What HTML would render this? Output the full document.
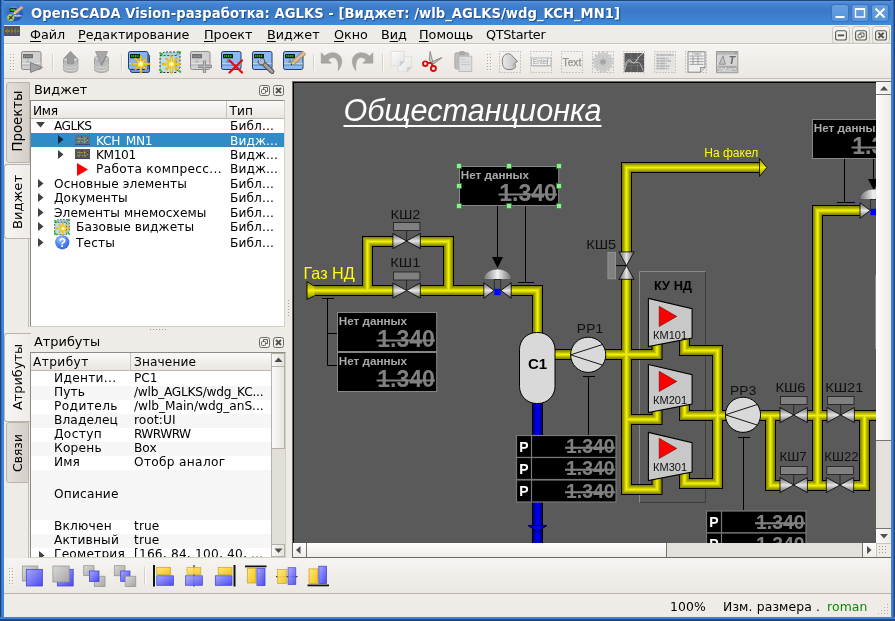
<!DOCTYPE html>
<html lang="ru"><head><meta charset="utf-8"><title>OpenSCADA Vision</title>
<style>
*{box-sizing:border-box}
html,body{margin:0;padding:0}
body{width:895px;height:621px;position:relative;overflow:hidden;background:#efebe7;font-family:"DejaVu Sans","Liberation Sans",sans-serif;font-size:12.5px;color:#000}
.a{position:absolute}
.t{position:absolute;white-space:pre;line-height:1}
u{text-decoration:underline;text-underline-offset:2px}
svg{position:absolute;overflow:visible}
#root{position:absolute;left:0;top:0;width:895px;height:621px;will-change:transform}

#title{left:0;top:0;width:895px;height:25px;background:linear-gradient(#5797e0 0,#4384d2 12%,#3a79c6 38%,#3c80ce 65%,#408ad9 100%);border-top:1px solid #21467c}
#title .tt{left:31px;top:6.3px;font-weight:bold;font-size:13.2px;letter-spacing:.02px;color:#fff;text-shadow:1px 1px 1px #1c4a8a}
.wb{position:absolute;top:3.4px;width:18px;height:18px;border-radius:3px;background:linear-gradient(#679fe0,#5594dc);border:1px solid #3a72bd}
#bl{left:0;top:0;width:4px;height:621px;background:linear-gradient(90deg,#1f4478 0,#1f4478 25%,#3270bd 25%,#3270bd 50%,#3d86dc 50%)}
#br{left:891px;top:0;width:4px;height:621px;background:linear-gradient(90deg,#3d86dc 0,#3a7ed0 55%,#234c86 70%,#1c3f70 100%)}
#bb{left:0;top:617px;width:895px;height:4px;background:linear-gradient(#3d86dc 0,#3a7ed0 50%,#234c86 62%,#1c3f70 100%)}
#menu{left:4px;top:25px;width:887px;height:19px;background:#efebe7;border-bottom:1px solid #c9c3bb}
#menu .t{top:4px;font-size:12.750px}
#tb{left:4px;top:44px;width:887px;height:35px;background:linear-gradient(#f6f4f1,#ebe7e2);border-top:1px solid #fbfaf9;border-bottom:1px solid #c4beb6}
.sep{position:absolute;top:54px;width:1px;height:17px;background:#d6d1ca;border-right:1px solid #faf9f8;box-sizing:content-box}
.mb{position:absolute;top:26px;width:18px;height:18px;border:1px solid #cbc5bd;border-radius:3.500px;background:linear-gradient(#f6f4f2,#ebe8e3)}

.vtab{position:absolute;border:1px solid #b9b4ac;border-right:none;border-radius:3px 0 0 3px}
.vtab.off{background:linear-gradient(90deg,#e2ded8,#d4cfc8);left:6px;width:24px;border-right:1px solid #b9b4ac}
.vtab.on{background:linear-gradient(90deg,#f7f5f3,#efebe7);left:4px;width:27px}
.vtab span{position:absolute;left:50%;top:50%;white-space:pre;font-size:13.1px;line-height:1;transform:translate(-50%,-50%) rotate(-90deg)}
.dt{font-size:12.9px}
.tree{position:absolute;background:#fff;border:1px solid #8f8a82;border-right-color:#d2cec8;border-bottom-color:#d2cec8;overflow:hidden}
.hdr{position:absolute;left:0;top:0;height:18px;background:linear-gradient(#fbfaf9,#e9e6e1);border-bottom:1px solid #bdb8b0}
.tree .t{font-size:12.2px;letter-spacing:.1px}
.dbtn{position:absolute;width:11px;height:11px;border:1px solid #6e6a64;border-radius:2.5px;background:#f3f1ee}
.tri{position:absolute;width:0;height:0}

#mdi{left:292px;top:81px;width:599px;height:477px;background:#6b6864}
#cv{left:293px;top:82px;width:583px;height:462px;background:#5a5a5a;overflow:hidden}
#cv svg{left:0;top:0}
.sbb{position:absolute;background:linear-gradient(#faf9f8,#e7e3de);border:1px solid #b3aea6}
.sbv{position:absolute;background:linear-gradient(90deg,#faf9f8,#e7e3de);border:1px solid #b3aea6}

#btb{left:4px;top:558px;width:887px;height:35px;background:linear-gradient(#f6f4f1,#ece8e3)}
#st{left:4px;top:593px;width:887px;height:24px;border-top:1px solid #b9b4ac;background:#efebe7}
#st .t{font-size:12.4px;top:6.500px;letter-spacing:.12px}
</style></head>
<body>
<div id="root">
<div id="title" class="a"><div class="t tt">OpenSCADA Vision-разработка: AGLKS - [Виджет: /wlb_AGLKS/wdg_KCH_MN1]</div>
<svg class="a" style="left:7px;top:4px" width="17" height="17" viewBox="0 0 17 17"><defs><radialGradient id="ag" cx=".4" cy=".25" r=".8"><stop offset="0" stop-color="#6f9bf0"/><stop offset=".6" stop-color="#2b5cd2"/><stop offset="1" stop-color="#1f46a8"/></radialGradient></defs><circle cx="8" cy="8.2" r="7.8" fill="url(#ag)"/><rect x="2.6" y="3.2" width="7" height="3.8" rx=".6" fill="#0c1a0c"/><rect x="3.4" y="4.1" width="5.2" height="1.9" fill="#22c022"/><circle cx="3.7" cy="12.4" r="3.5" fill="#b4c860"/><path d="M1.8 14.6l4-4.2M2.3 11.3l3 2.6" stroke="#2c3010" stroke-width="1.1"/><path d="M7 10.8h7.6" stroke="#d6d040" stroke-width="1.3"/><path d="M8.5 9.8l.8 1.8M11.5 9.6l.6 2" stroke="#e8e8c0" stroke-width=".8"/><path d="M7.3 8.2L15.3 2" stroke="#b89468" stroke-width="3"/><path d="M7.3 8.2L15.3 2" stroke="#e2bd8c" stroke-width="2"/><path d="M6.2 9.2l1.3-2.4 1.7 2z" fill="#e6d870"/></svg>
<div class="wb" style="left:831px"><svg width="18" height="18" style="left:-1px;top:-1px"><path d="M4.5 13h9" stroke="#fff" stroke-width="2"/></svg></div><div class="wb" style="left:851px"><svg width="18" height="18" style="left:-1px;top:-1px"><rect x="4.5" y="5" width="9" height="8" fill="none" stroke="#fff" stroke-width="1.4"/><path d="M4 5h10" stroke="#fff" stroke-width="2"/></svg></div><div class="wb" style="left:871px"><svg width="18" height="18" style="left:-1px;top:-1px"><path d="M4.5 4.5l9 9M13.5 4.5l-9 9" stroke="#fff" stroke-width="2"/></svg></div></div>
<div id="bl" class="a"></div><div id="br" class="a"></div><div id="bb" class="a"></div>
<div id="menu" class="a"><div class="t" style="left:26px"><u>Ф</u>айл</div><div class="t" style="left:74px"><u>Р</u>едактирование</div><div class="t" style="left:200px"><u>П</u>роект</div><div class="t" style="left:263px"><u>В</u>иджет</div><div class="t" style="left:330px"><u>О</u>кно</div><div class="t" style="left:377px">В<u>и</u>д</div><div class="t" style="left:415px"><u>П</u>омощь</div><div class="t" style="left:482px"><span style="letter-spacing:-.3px">QTStarter</span></div></div>
<svg class="a" style="left:4.4px;top:26px" width="16" height="10"><rect width="16" height="10" fill="#55555a"/><path d="M1 5h14" stroke="#b0a83a" stroke-width="1.2" stroke-dasharray="2 1"/><path d="M3.5 2.5v5M7.5 2.5v5M11.5 2.5v5" stroke="#77775c" stroke-width="1"/><rect y="9" width="16" height="1" fill="#4a4a80"/></svg>
<div class="mb" style="left:832px"><svg width="16" height="16"><rect x="2.600" y="3.700" width="10.800" height="9.300" rx="2" fill="#f6f5f3" stroke="#5a5751" stroke-width="1.100"/><path d="M4.800 8.400h6.400" stroke="#5a5751" stroke-width="2"/></svg></div><div class="mb" style="left:852px"><svg width="16" height="16"><rect x="2.600" y="3.700" width="10.800" height="9.300" rx="2" fill="#f6f5f3" stroke="#5a5751" stroke-width="1.100"/><rect x="5" y="7.500" width="3.600" height="3.400" rx="1" fill="none" stroke="#5a5751" stroke-width="1"/><path d="M6.800 7.300V6h4.200v3.800H9" fill="none" stroke="#5a5751" stroke-width="1"/></svg></div><div class="mb" style="left:872px"><svg width="16" height="16"><rect x="2.600" y="3.700" width="10.800" height="9.300" rx="2" fill="#f6f5f3" stroke="#5a5751" stroke-width="1.100"/><path d="M5.300 5.800l5.400 5.200M10.700 5.800l-5.400 5.200" stroke="#5a5751" stroke-width="2"/></svg></div>
<div id="tb" class="a"></div>
<svg class="a" style="left:10px;top:54px" width="6" height="22"><rect x="0" y="0" width="1" height="1" fill="#b0aaa1"/><rect x="1" y="1" width="1" height="1" fill="#fbfaf9"/><rect x="3" y="0" width="1" height="1" fill="#b0aaa1"/><rect x="4" y="1" width="1" height="1" fill="#fbfaf9"/><rect x="0" y="3" width="1" height="1" fill="#b0aaa1"/><rect x="1" y="4" width="1" height="1" fill="#fbfaf9"/><rect x="3" y="3" width="1" height="1" fill="#b0aaa1"/><rect x="4" y="4" width="1" height="1" fill="#fbfaf9"/><rect x="0" y="6" width="1" height="1" fill="#b0aaa1"/><rect x="1" y="7" width="1" height="1" fill="#fbfaf9"/><rect x="3" y="6" width="1" height="1" fill="#b0aaa1"/><rect x="4" y="7" width="1" height="1" fill="#fbfaf9"/><rect x="0" y="9" width="1" height="1" fill="#b0aaa1"/><rect x="1" y="10" width="1" height="1" fill="#fbfaf9"/><rect x="3" y="9" width="1" height="1" fill="#b0aaa1"/><rect x="4" y="10" width="1" height="1" fill="#fbfaf9"/><rect x="0" y="12" width="1" height="1" fill="#b0aaa1"/><rect x="1" y="13" width="1" height="1" fill="#fbfaf9"/><rect x="3" y="12" width="1" height="1" fill="#b0aaa1"/><rect x="4" y="13" width="1" height="1" fill="#fbfaf9"/><rect x="0" y="15" width="1" height="1" fill="#b0aaa1"/><rect x="1" y="16" width="1" height="1" fill="#fbfaf9"/><rect x="3" y="15" width="1" height="1" fill="#b0aaa1"/><rect x="4" y="16" width="1" height="1" fill="#fbfaf9"/></svg>
<svg class="a" style="left:21px;top:51px" width="22" height="22" viewBox="0 0 22 22"><rect x=".5" y=".5" width="19.5" height="18" rx="1.8" fill="#d0d0d0" stroke="#8c8c8c"/><rect x="2" y="3" width="10" height="4.200" rx=".5" fill="#6e6e6e"/><path d="M3 5.100h8" stroke="#a0a0a0" stroke-width="1.400" stroke-dasharray="1.400 .6"/><path d="M7 7.500v3.500M5 11h4" stroke="#a9a9a9" stroke-width=".8"/><rect x="1" y="12" width="18.500" height="1.300" fill="#e2e2e2"/><rect x="1" y="13.300" width="18.500" height="1.500" fill="#bcbcbc"/><path d="M9.500 11.500l12 5-12 5z" fill="#a3a3a3" stroke="#828282" stroke-linejoin="round"/></svg>
<div class="sep" style="left:52px"></div><svg class="a" style="left:59px;top:51px" width="22" height="22" viewBox="0 0 22 22"><path d="M4.5 8v10.5c0 1.800 3.200 3 7.200 3s7.200-1.200 7.200-3V8z" fill="#bcbcbc" stroke="#9a9a9a" stroke-width=".8"/><path d="M4.5 13.5c0 1.800 3.200 3 7.200 3s7.200-1.200 7.200-3M4.5 16.5c0 1.800 3.200 3 7.200 3s7.200-1.200 7.200-3" fill="none" stroke="#d8d8d8" stroke-width=".9"/><ellipse cx="11.7" cy="8.5" rx="7.2" ry="3" fill="#cdcdcd" stroke="#9a9a9a" stroke-width=".8"/><path d="M11.5 .3l6 6.500h-3v6h-6v-6h-3z" fill="#9c9c9c" stroke="#8a8a8a" stroke-width=".7"/></svg>
<svg class="a" style="left:90px;top:51px" width="22" height="22" viewBox="0 0 22 22"><path d="M4.5 7v11.5c0 1.800 3.200 3 7 3s7-1.200 7-3V7z" fill="#bcbcbc" stroke="#9a9a9a" stroke-width=".8"/><path d="M4.5 13.5c0 1.800 3.200 3 7 3s7-1.200 7-3M4.5 16.500c0 1.800 3.200 3 7 3s7-1.200 7-3" fill="none" stroke="#d8d8d8" stroke-width=".9"/><ellipse cx="11.5" cy="7.5" rx="7" ry="2.800" fill="#cdcdcd" stroke="#9a9a9a" stroke-width=".8"/><path d="M5.5 .5h12l-6 13.800z" fill="#a8a8a8" stroke="#8a8a8a" stroke-width=".7"/><path d="M11.5 14l5-9" stroke="#8a8a8a" stroke-width="1.200"/></svg>
<div class="sep" style="left:121px"></div><svg class="a" style="left:128px;top:51px" width="22" height="22" viewBox="0 0 22 22"><rect x="2.500" y="3.500" width="19" height="18" rx="1.800" fill="#6a98e2" stroke="#1f3d70"/><rect x=".5" y=".5" width="19.500" height="18" rx="1.800" fill="#86b2f2" stroke="#1f3d70"/><rect x="2" y="3" width="10" height="4.200" rx=".5" fill="#0a1f0a"/><path d="M3 5.100h8" stroke="#2fd42f" stroke-width="1.500" stroke-dasharray="1.400 .6"/><rect x="1" y="12" width="5" height="1.200" fill="#d8e050"/><g transform="translate(12.8 12.9)"><g stroke="#eeb000" stroke-linecap="round"><path d="M0 -7.500V8.500M-8.500 0H8.500" stroke-width="2.300"/><path d="M-5.200 -5.200L5.200 5.200M5.200 -5.200L-5.200 5.200" stroke-width="2.100"/></g><g stroke="#ffe030" stroke-linecap="round"><path d="M0 -6V7M-7 0H7M-4 -4L4 4M4 -4L-4 4" stroke-width="1"/></g><circle r="2.600" fill="#fff27a"/><circle r="1.300" fill="#fffbd0"/></g></svg>
<svg class="a" style="left:159px;top:51px" width="22" height="22" viewBox="0 0 22 22"><path d="M1 4.500L5 1h16v16l-4 4.500H1z" fill="#a9d2da" stroke="#223" stroke-width=".9" stroke-dasharray="2 1.600"/><path d="M1 4.500h16v17M17 4.500l4-3.500" fill="none" stroke="#335" stroke-width=".8" stroke-dasharray="2 1.600"/><rect x="2" y="5.500" width="14.500" height="15.500" fill="#c2e2e6" opacity=".7"/><path d="M.5 1.500l3 2.500M22 1.500l-3-1M.5 18.500l3 3M22 21.500l-2.500-2" stroke="#18c818" stroke-width="1.700"/><g transform="translate(12.5 13)"><g stroke="#eeb000" stroke-linecap="round"><path d="M0 -7.500V8.500M-8.500 0H8.500" stroke-width="2.300"/><path d="M-5.200 -5.200L5.200 5.200M5.200 -5.200L-5.200 5.200" stroke-width="2.100"/></g><g stroke="#ffe030" stroke-linecap="round"><path d="M0 -6V7M-7 0H7M-4 -4L4 4M4 -4L-4 4" stroke-width="1"/></g><circle r="2.600" fill="#fff27a"/><circle r="1.300" fill="#fffbd0"/></g></svg>
<svg class="a" style="left:190px;top:51px" width="22" height="22" viewBox="0 0 22 22"><rect x=".5" y=".5" width="19.5" height="18" rx="1.8" fill="#d0d0d0" stroke="#8c8c8c"/><rect x="2" y="3" width="10" height="4.200" rx=".5" fill="#6e6e6e"/><path d="M3 5.100h8" stroke="#a0a0a0" stroke-width="1.400" stroke-dasharray="1.400 .6"/><path d="M7 7.500v3.500M5 11h4" stroke="#a9a9a9" stroke-width=".8"/><rect x="1" y="12" width="18.500" height="1.300" fill="#e2e2e2"/><rect x="1" y="13.300" width="18.500" height="1.500" fill="#bcbcbc"/><path d="M14.500 9.500v12.500M8 15.400h14" stroke="#8c8c8c" stroke-width="3.200"/><path d="M14.500 10v11.500M8.500 15.400h13" stroke="#b8b8b8" stroke-width="1.400"/></svg>
<svg class="a" style="left:221px;top:51px" width="22" height="22" viewBox="0 0 22 22"><rect x=".5" y=".5" width="19.500" height="18" rx="1.800" fill="#8dbaf4" stroke="#1f3d70"/><rect x="2" y="3" width="10" height="4.200" rx=".5" fill="#0a1f0a"/><path d="M3 5.100h8" stroke="#2fd42f" stroke-width="1.500" stroke-dasharray="1.400 .6"/><path d="M7 7.500v3.500M5 11h4" stroke="#4a6a9a" stroke-width=".8"/><rect x="1" y="12" width="18.500" height="1.400" fill="#d8e050"/><rect x="1" y="13.400" width="18.500" height="1.500" fill="#6a9ae0"/><path d="M8.500 9.500l12.500 12M21 9.500L8.500 21.500" stroke="#e60a0a" stroke-width="2.300" stroke-linecap="round"/></svg>
<svg class="a" style="left:252px;top:51px" width="22" height="22" viewBox="0 0 22 22"><rect x=".5" y=".5" width="19.500" height="18" rx="1.800" fill="#8dbaf4" stroke="#1f3d70"/><rect x="2" y="3" width="10" height="4.200" rx=".5" fill="#0a1f0a"/><path d="M3 5.100h8" stroke="#2fd42f" stroke-width="1.500" stroke-dasharray="1.400 .6"/><path d="M7 7.500v3.500M5 11h4" stroke="#4a6a9a" stroke-width=".8"/><rect x="1" y="12" width="18.500" height="1.400" fill="#d8e050"/><rect x="1" y="13.400" width="18.500" height="1.500" fill="#6a9ae0"/><path d="M10.500 11.500l9.500 9" stroke="#4e4e4e" stroke-width="4.800" stroke-linecap="round"/><path d="M10.500 11.500l9.500 9" stroke="#a2a2a2" stroke-width="3" stroke-linecap="round"/><circle cx="9.500" cy="10.500" r="3.300" fill="#bdbdbd" stroke="#4e4e4e" stroke-width=".9"/><path d="M6.500 7.500l3.200 3.200" stroke="#8dbaf4" stroke-width="2.200"/></svg>
<svg class="a" style="left:283px;top:51px" width="22" height="22" viewBox="0 0 22 22"><rect x=".5" y=".5" width="19.500" height="18" rx="1.800" fill="#8dbaf4" stroke="#1f3d70"/><rect x="2" y="3" width="10" height="4.200" rx=".5" fill="#0a1f0a"/><path d="M3 5.100h8" stroke="#2fd42f" stroke-width="1.500" stroke-dasharray="1.400 .6"/><path d="M7 7.500v3.500M5 11h4" stroke="#4a6a9a" stroke-width=".8"/><rect x="1" y="12" width="18.500" height="1.400" fill="#d8e050"/><rect x="1" y="13.400" width="18.500" height="1.500" fill="#6a9ae0"/><path d="M11 11L21.500 1.500" stroke="#9a7a50" stroke-width="4.600"/><path d="M11 11L21.500 1.500" stroke="#dcb98e" stroke-width="3.200"/><path d="M8 13.500l1.500-4 3.500 3.500z" fill="#e6d668" stroke="#8a7a30" stroke-width=".5"/><path d="M8 13.500l1-.3" stroke="#222" stroke-width="1"/></svg>
<div class="sep" style="left:313px"></div><svg class="a" style="left:321px;top:51px" width="22" height="22" viewBox="0 0 22 22"><path d="M.2 1.800V12.200H10.400L7.200 9.200C9.200 6.300 13.200 5.600 15.400 8.300C17.600 11 17.600 16 17.200 19.700C20 16 21.700 11 20.200 7C18.200 1.800 10 -.8 3.600 5z" fill="#a8a6a3" stroke="#9a9895" stroke-width=".5"/></svg>
<svg class="a" style="left:352px;top:51px" width="22" height="22" viewBox="0 0 22 22"><path transform="translate(21.100 0) scale(-1 1)" d="M.2 1.800V12.200H10.400L7.200 9.200C9.200 6.300 13.200 5.600 15.400 8.300C17.600 11 17.600 16 17.200 19.700C20 16 21.700 11 20.200 7C18.200 1.800 10 -.8 3.600 5z" fill="#a8a6a3" stroke="#9a9895" stroke-width=".5"/></svg>
<div class="sep" style="left:382px"></div><svg class="a" style="left:390px;top:51px" width="22" height="22" viewBox="0 0 22 22"><defs><linearGradient id="pg" x1="0" y1="0" x2="1" y2="1"><stop offset="0" stop-color="#fdfdfd"/><stop offset="1" stop-color="#e2e2e2"/></linearGradient></defs><path d="M8 5.700h13.700v10.800l-4.300 4.300H8z" fill="url(#pg)" stroke="#d9d9d9" stroke-width=".8"/><path d="M17.400 20.800v-4.300h4.300" fill="#cfcfcf" stroke="#c8c8c8" stroke-width=".6"/><path d="M1 .4h13.400v10.200l-4.300 4.300H1z" fill="url(#pg)" stroke="#d9d9d9" stroke-width=".8"/><path d="M10.100 14.900v-4.300h4.300" fill="#cfcfcf" stroke="#c8c8c8" stroke-width=".6"/></svg>
<svg class="a" style="left:421px;top:51px" width="22" height="22" viewBox="0 0 22 22"><path d="M9.100 .4L8.300 9l2.200 3 1.200-1.600z" fill="#c9c9c9" stroke="#6e6e6e" stroke-width=".7"/><path d="M21 6.600L13.500 9.500l-3.300 2.300 1.800 1.600z" fill="#bdbdbd" stroke="#6e6e6e" stroke-width=".7"/><circle cx="4.300" cy="12.700" r="2.300" fill="none" stroke="#d00f0f" stroke-width="1.900"/><circle cx="12.400" cy="17.500" r="2.500" fill="none" stroke="#d00f0f" stroke-width="1.900"/><path d="M6.300 11.800l4 .2M11.300 15.200l-.5-3" stroke="#d00f0f" stroke-width="1.800"/></svg>
<svg class="a" style="left:452px;top:51px" width="22" height="22" viewBox="0 0 22 22"><rect x="2.800" y="1.800" width="14" height="16.200" rx="1.500" fill="#bcbcbc" stroke="#a4a4a4" stroke-width=".8"/><rect x="7.500" y=".5" width="5" height="3" rx="1" fill="#aaa" stroke="#999" stroke-width=".6"/><rect x="7" y="5.200" width="12.800" height="15.300" fill="#dedede" stroke="#b5b5b5" stroke-width=".8"/><path d="M9 8.500h4M9 11h9M9 13.500h9" stroke="#c4c4c4" stroke-width=".8"/></svg>
<svg class="a" style="left:487px;top:54px" width="6" height="22"><rect x="0" y="0" width="1" height="1" fill="#b0aaa1"/><rect x="1" y="1" width="1" height="1" fill="#fbfaf9"/><rect x="3" y="0" width="1" height="1" fill="#b0aaa1"/><rect x="4" y="1" width="1" height="1" fill="#fbfaf9"/><rect x="0" y="3" width="1" height="1" fill="#b0aaa1"/><rect x="1" y="4" width="1" height="1" fill="#fbfaf9"/><rect x="3" y="3" width="1" height="1" fill="#b0aaa1"/><rect x="4" y="4" width="1" height="1" fill="#fbfaf9"/><rect x="0" y="6" width="1" height="1" fill="#b0aaa1"/><rect x="1" y="7" width="1" height="1" fill="#fbfaf9"/><rect x="3" y="6" width="1" height="1" fill="#b0aaa1"/><rect x="4" y="7" width="1" height="1" fill="#fbfaf9"/><rect x="0" y="9" width="1" height="1" fill="#b0aaa1"/><rect x="1" y="10" width="1" height="1" fill="#fbfaf9"/><rect x="3" y="9" width="1" height="1" fill="#b0aaa1"/><rect x="4" y="10" width="1" height="1" fill="#fbfaf9"/><rect x="0" y="12" width="1" height="1" fill="#b0aaa1"/><rect x="1" y="13" width="1" height="1" fill="#fbfaf9"/><rect x="3" y="12" width="1" height="1" fill="#b0aaa1"/><rect x="4" y="13" width="1" height="1" fill="#fbfaf9"/><rect x="0" y="15" width="1" height="1" fill="#b0aaa1"/><rect x="1" y="16" width="1" height="1" fill="#fbfaf9"/><rect x="3" y="15" width="1" height="1" fill="#b0aaa1"/><rect x="4" y="16" width="1" height="1" fill="#fbfaf9"/></svg>
<svg class="a" style="left:499px;top:51px" width="22" height="22" viewBox="0 0 22 22"><rect x=".5" y=".5" width="21" height="21" fill="none" stroke="#a2a2a2" stroke-dasharray="1 2"/><defs><linearGradient id="shg" x1="0" x2="1"><stop offset="0" stop-color="#e9e9e9"/><stop offset="1" stop-color="#bdbdbd"/></linearGradient></defs><path d="M3.500 8C4 3.500 9 1.500 12 3.500L18.500 10.500L15.200 12.500C17 13.500 17.200 15.500 15.800 17C13.800 19 8 19.200 5.800 17.500C3.200 15.500 3.200 11 3.500 8z" fill="url(#shg)" stroke="#777" stroke-width=".9"/><path d="M15.200 12.500c-1 .8-1.200 2.500-.5 3.500" fill="none" stroke="#999" stroke-width=".7"/></svg>
<svg class="a" style="left:530px;top:51px" width="22" height="22" viewBox="0 0 22 22"><rect x=".5" y=".5" width="21" height="21" fill="none" stroke="#a2a2a2" stroke-dasharray="1 2"/><rect x="1.500" y="7" width="19.500" height="7.500" fill="#f1f1f1" stroke="#a9a9a9" stroke-width=".8"/><path d="M2 15.200h19.500" stroke="#c4c4c4"/><path d="M17.500 7v7.500" stroke="#a9a9a9" stroke-width=".8"/><text x="3" y="13" font-size="6.500" fill="#979797" font-family="Liberation Sans,sans-serif">Enter</text></svg>
<svg class="a" style="left:561px;top:51px" width="22" height="22" viewBox="0 0 22 22"><rect x=".5" y=".5" width="21" height="21" fill="none" stroke="#a2a2a2" stroke-dasharray="1 2"/><text x="1.600" y="14.600" font-size="10.200" fill="#8f8f8f" stroke="#8f8f8f" stroke-width=".25" font-family="Liberation Sans,sans-serif">Text</text></svg>
<svg class="a" style="left:592px;top:51px" width="22" height="22" viewBox="0 0 22 22"><rect x=".5" y=".5" width="21" height="21" fill="none" stroke="#a2a2a2" stroke-dasharray="1 2"/><ellipse cx="11" cy="5.200" rx="1.500" ry="4.800" fill="#cfcfcf" stroke="#b2b2b2" stroke-width=".4" transform="rotate(0 11 11)"/><ellipse cx="11" cy="5.200" rx="1.500" ry="4.800" fill="#cfcfcf" stroke="#b2b2b2" stroke-width=".4" transform="rotate(24 11 11)"/><ellipse cx="11" cy="5.200" rx="1.500" ry="4.800" fill="#cfcfcf" stroke="#b2b2b2" stroke-width=".4" transform="rotate(48 11 11)"/><ellipse cx="11" cy="5.200" rx="1.500" ry="4.800" fill="#cfcfcf" stroke="#b2b2b2" stroke-width=".4" transform="rotate(72 11 11)"/><ellipse cx="11" cy="5.200" rx="1.500" ry="4.800" fill="#cfcfcf" stroke="#b2b2b2" stroke-width=".4" transform="rotate(96 11 11)"/><ellipse cx="11" cy="5.200" rx="1.500" ry="4.800" fill="#cfcfcf" stroke="#b2b2b2" stroke-width=".4" transform="rotate(120 11 11)"/><ellipse cx="11" cy="5.200" rx="1.500" ry="4.800" fill="#cfcfcf" stroke="#b2b2b2" stroke-width=".4" transform="rotate(144 11 11)"/><ellipse cx="11" cy="5.200" rx="1.500" ry="4.800" fill="#cfcfcf" stroke="#b2b2b2" stroke-width=".4" transform="rotate(168 11 11)"/><ellipse cx="11" cy="5.200" rx="1.500" ry="4.800" fill="#cfcfcf" stroke="#b2b2b2" stroke-width=".4" transform="rotate(192 11 11)"/><ellipse cx="11" cy="5.200" rx="1.500" ry="4.800" fill="#cfcfcf" stroke="#b2b2b2" stroke-width=".4" transform="rotate(216 11 11)"/><ellipse cx="11" cy="5.200" rx="1.500" ry="4.800" fill="#cfcfcf" stroke="#b2b2b2" stroke-width=".4" transform="rotate(240 11 11)"/><ellipse cx="11" cy="5.200" rx="1.500" ry="4.800" fill="#cfcfcf" stroke="#b2b2b2" stroke-width=".4" transform="rotate(264 11 11)"/><ellipse cx="11" cy="5.200" rx="1.500" ry="4.800" fill="#cfcfcf" stroke="#b2b2b2" stroke-width=".4" transform="rotate(288 11 11)"/><ellipse cx="11" cy="5.200" rx="1.500" ry="4.800" fill="#cfcfcf" stroke="#b2b2b2" stroke-width=".4" transform="rotate(312 11 11)"/><ellipse cx="11" cy="5.200" rx="1.500" ry="4.800" fill="#cfcfcf" stroke="#b2b2b2" stroke-width=".4" transform="rotate(336 11 11)"/><circle cx="11" cy="11" r="2.800" fill="#a6a6a6"/></svg>
<svg class="a" style="left:623px;top:51px" width="22" height="22" viewBox="0 0 22 22"><rect x=".5" y=".5" width="21" height="21" fill="none" stroke="#a2a2a2" stroke-dasharray="1 2"/><rect x="1.500" y="2" width="19.500" height="19" fill="#5a5a5a"/><path d="M1.500 8.300h19.500M1.500 14.600h19.500M8 2v19M14.500 2v19" stroke="#777" stroke-width=".7"/><path d="M2 14c2-5 4-6 6-4s3 3 5 0 4-6 7.500-8" fill="none" stroke="#cfcfcf" stroke-width="1"/><path d="M2 19c1-6 3-9 5-8s4 1 7 .5 3 1 4 3 2 5 2.500 6" fill="none" stroke="#b0b0b0" stroke-width="1"/></svg>
<svg class="a" style="left:654px;top:51px" width="22" height="22" viewBox="0 0 22 22"><rect x=".5" y=".5" width="21" height="21" fill="none" stroke="#a2a2a2" stroke-dasharray="1 2"/><rect x="1.500" y="1.500" width="19" height="19" fill="#e3e3e3"/><path d="M2.500 4h17M2.500 7.500h12M2.500 10h15M2.500 12.500h10M2.500 15h13M2.500 17.500h12" stroke="#b1b1b1" stroke-width="1.300" stroke-dasharray="3 .5 5 .5 2 .5"/></svg>
<svg class="a" style="left:685px;top:51px" width="22" height="22" viewBox="0 0 22 22"><rect x=".5" y=".5" width="21" height="21" fill="none" stroke="#a2a2a2" stroke-dasharray="1 2"/><path d="M3 .8h17v15.700l-4.500 4.700H3z" fill="#efefef" stroke="#808080" stroke-width=".9"/><path d="M4.500 5h14M4.500 7.800h14M4.500 10.600h14M4.500 13.400h14M8 5v8.400M13 5v8.400" stroke="#8f8f8f" stroke-width=".8"/><path d="M15.500 21.200v-4.700H20" fill="#d4d4d4" stroke="#808080" stroke-width=".8"/><text x="7" y="4.300" font-size="3.600" fill="#888" font-family="Liberation Sans,sans-serif">Order</text></svg>
<svg class="a" style="left:716px;top:51px" width="22" height="22" viewBox="0 0 22 22"><rect x=".5" y=".5" width="21.300" height="21.200" fill="#d4d4d4" stroke="#9a9a9a"/><rect x="1" y="1" width="20.300" height="2.600" fill="#b4b4b4"/><path d="M19 1.200l1.800 1.800M20.800 1.200L19 3" stroke="#888" stroke-width=".6"/><path d="M3.200 13.200L7 4.800l2.300 8.400z" fill="#c4c4c4" stroke="#909090" stroke-width="1"/><text x="12.800" y="12.800" font-size="10.500" font-weight="bold" font-style="italic" fill="#6a6a6a" font-family="Liberation Sans,sans-serif">T</text><rect x="1.500" y="14.800" width="19.300" height="5.400" fill="#a9a9a9"/><text x="2" y="19.700" font-size="6" fill="#f3f3f3" font-family="Liberation Sans,sans-serif">Value=</text></svg>
<div class="vtab off" style="top:82px;height:81px"><span style="font-size:13.300px;margin-top:-1.200px">Проекты</span></div><div class="vtab on" style="top:164px;height:75px"><span>Виджет</span></div><div class="vtab on" style="top:333px;height:89px"><span style="font-size:12.900px;margin-top:-.6px">Атрибуты</span></div><div class="vtab off" style="top:422px;height:61px;width:23px"><span style="font-size:12.300px">Связи</span></div>
<div class="a" style="left:28px;top:239px;width:1px;height:88px;background:#c2bdb5"></div><div class="a" style="left:28px;top:483px;width:1px;height:75px;background:#c2bdb5"></div>
<div class="t dt" style="left:34px;top:84px">Виджет</div><div class="dbtn" style="left:259px;top:85px"><svg width="9" height="9"><rect x="1.500" y="3.500" width="4" height="4" rx="1" fill="none" stroke="#55524d" stroke-width=".9"/><path d="M3.500 3V1.500h4v4H6" fill="none" stroke="#55524d" stroke-width=".9"/></svg></div><div class="dbtn" style="left:273px;top:85px"><svg width="9" height="9"><path d="M2 2l5 5M7 2l-5 5" stroke="#55524d" stroke-width="1.800"/></svg></div>
<div class="tree" style="left:30px;top:100px;width:255px;height:227px"><div class="hdr" style="width:196px;border-right:1px solid #c9c4bc"><div class="t" style="left:2px;top:3.500px;letter-spacing:-.3px">Имя</div></div><div class="hdr" style="left:196px;width:60px"><div class="t" style="left:2.500px;top:3.500px">Тип</div></div><svg class="a" style="left:5px;top:20.950000000000003px" width="9" height="6"><path d="M0 0h9L4.500 5.500z" fill="#404040"/></svg><div class="t" style="left:23px;top:18.8px;color:#000;letter-spacing:-.5px">AGLKS</div><div class="t" style="left:199px;top:18.8px;color:#000">Библ...</div><div class="a" style="left:0;top:31.5px;width:252.500px;height:14px;background:#308cc6"></div><svg class="a" style="left:27px;top:34.14999999999999px" width="6" height="9"><path d="M0 0l5.500 4.500L0 9z" fill="#0f2a3f"/></svg><svg class="a" style="left:44.3px;top:33.849999999999994px" width="15" height="10"><rect width="15" height="10" fill="#5c7286"/><rect x="2.500" y="3.300" width="10" height="3.600" fill="none" stroke="#a9b36a" stroke-width=".9" stroke-dasharray="2.200 .8"/><path d="M5 2.500v5M9.500 2.500v5" stroke="#a9b36a" stroke-width=".7" opacity=".7"/><path d="M1.500 5h1.200M5.500 7.200h1M12 3.500h1.200M12 7h1M6 2.200h1" stroke="#1d2f3f" stroke-width="1.100"/><rect y="9.200" width="15" height=".8" fill="#3d3d80"/></svg><div class="t" style="left:65px;top:33.6px;color:#fff;letter-spacing:-.32px">KCH_MN1</div><div class="t" style="left:199px;top:33.6px;color:#fff">Видж...</div><svg class="a" style="left:27px;top:48.55px" width="6" height="9"><path d="M0 0l5.500 4.500L0 9z" fill="#404040"/></svg><svg class="a" style="left:44.3px;top:48.25px" width="15" height="10"><rect width="15" height="10" fill="#57575a"/><rect x="2.500" y="3.300" width="10" height="3.600" fill="none" stroke="#b9b040" stroke-width=".9" stroke-dasharray="2.200 .8"/><path d="M5 2.500v5M9.500 2.500v5" stroke="#b9b040" stroke-width=".7" opacity=".7"/><path d="M1.500 5h1.200M5.500 7.200h1M12 3.500h1.200M12 7h1M6 2.200h1" stroke="#1e1e1e" stroke-width="1.100"/><rect y="9.200" width="15" height=".8" fill="#3d3d80"/></svg><div class="t" style="left:65px;top:48.0px;color:#000;letter-spacing:-.4px">KM101</div><div class="t" style="left:199px;top:48.0px;color:#000">Видж...</div><svg class="a" style="left:46.300px;top:61.55000000000001px" width="12" height="13"><path d="M0 0l11 6.500L0 13z" fill="#f00"/></svg><div class="t" style="left:65px;top:62.4px;color:#000;letter-spacing:.3px">Работа компресс...</div><div class="t" style="left:199px;top:62.4px;color:#000">Видж...</div><svg class="a" style="left:7px;top:78.05000000000001px" width="6" height="9"><path d="M0 0l5.500 4.500L0 9z" fill="#404040"/></svg><div class="t" style="left:23px;top:76.9px;color:#000;letter-spacing:.1px">Основные элементы</div><div class="t" style="left:199px;top:76.9px;color:#000">Библ...</div><svg class="a" style="left:7px;top:92.35px" width="6" height="9"><path d="M0 0l5.500 4.500L0 9z" fill="#404040"/></svg><div class="t" style="left:23px;top:91.1px;color:#000;letter-spacing:.1px">Документы</div><div class="t" style="left:199px;top:91.1px;color:#000">Библ...</div><svg class="a" style="left:7px;top:106.65px" width="6" height="9"><path d="M0 0l5.500 4.500L0 9z" fill="#404040"/></svg><div class="t" style="left:23px;top:105.5px;color:#000;letter-spacing:.1px">Элементы мнемосхемы</div><div class="t" style="left:199px;top:105.5px;color:#000">Библ...</div><svg class="a" style="left:7px;top:120.94999999999999px" width="6" height="9"><path d="M0 0l5.500 4.500L0 9z" fill="#404040"/></svg><svg class="a" style="left:23px;top:117.9px" width="16" height="16" viewBox="0 0 22 22"><path d="M1 4.5L5 1h16v16l-4 4.5H1z" fill="#a9d2da" stroke="#223" stroke-width="1.1" stroke-dasharray="2.4 1.8"/><path d="M1 4.5h16v17M17 4.5l4-3.5" fill="none" stroke="#335" stroke-width="1" stroke-dasharray="2.4 1.8"/><rect x="2" y="5.5" width="14.5" height="15.5" fill="#c2e2e6" opacity=".7"/><path d="M.5 1.5l3.400 2.800M22 1.500l-3.400-1M.5 18.500l3.400 3.200M22 21.500l-3-2.400" stroke="#18c818" stroke-width="2"/><g transform="translate(12.5 13)"><g stroke="#eeb000" stroke-linecap="round"><path d="M0 -7.500V8.500M-8.500 0H8.500" stroke-width="2.300"/><path d="M-5.200 -5.200L5.200 5.200M5.200 -5.200L-5.200 5.200" stroke-width="2.100"/></g><g stroke="#ffe030" stroke-linecap="round"><path d="M0 -6V7M-7 0H7M-4 -4L4 4M4 -4L-4 4" stroke-width="1"/></g><circle r="2.600" fill="#fff27a"/><circle r="1.300" fill="#fffbd0"/></g></svg><div class="t" style="left:45px;top:119.7px;color:#000;letter-spacing:.1px">Базовые виджеты</div><div class="t" style="left:199px;top:119.7px;color:#000">Библ...</div><svg class="a" style="left:7px;top:136.95px" width="6" height="9"><path d="M0 0l5.500 4.500L0 9z" fill="#404040"/></svg><svg class="a" style="left:23.8px;top:134.3px" width="15" height="15"><defs><radialGradient id="hg" cx=".4" cy=".3" r=".8"><stop offset="0" stop-color="#a8caff"/><stop offset=".55" stop-color="#4a82ee"/><stop offset="1" stop-color="#2a5ed6"/></radialGradient></defs><circle cx="7.3" cy="7.3" r="7.1" fill="url(#hg)"/><text x="7.3" y="11.8" text-anchor="middle" font-size="12" font-weight="bold" fill="#fff" font-family="Liberation Sans,sans-serif">?</text></svg><div class="t" style="left:45px;top:135.8px;color:#000;letter-spacing:.1px">Тесты</div><div class="t" style="left:199px;top:135.8px;color:#000">Библ...</div></div>
<svg class="a" style="left:150px;top:329px" width="20" height="2"><rect x="0" y="0" width="1" height="1" fill="#a09a92"/><rect x="3" y="0" width="1" height="1" fill="#a09a92"/><rect x="6" y="0" width="1" height="1" fill="#a09a92"/><rect x="9" y="0" width="1" height="1" fill="#a09a92"/><rect x="12" y="0" width="1" height="1" fill="#a09a92"/><rect x="15" y="0" width="1" height="1" fill="#a09a92"/></svg><svg class="a" style="left:288px;top:300px" width="2" height="20"><rect x="0" y="0" width="1" height="1" fill="#a09a92"/><rect x="0" y="3" width="1" height="1" fill="#a09a92"/><rect x="0" y="6" width="1" height="1" fill="#a09a92"/><rect x="0" y="9" width="1" height="1" fill="#a09a92"/><rect x="0" y="12" width="1" height="1" fill="#a09a92"/><rect x="0" y="15" width="1" height="1" fill="#a09a92"/></svg>
<div class="t dt" style="left:34px;top:336px">Атрибуты</div><div class="dbtn" style="left:259px;top:337px"><svg width="9" height="9"><rect x="1.500" y="3.500" width="4" height="4" rx="1" fill="none" stroke="#55524d" stroke-width=".9"/><path d="M3.500 3V1.500h4v4H6" fill="none" stroke="#55524d" stroke-width=".9"/></svg></div><div class="dbtn" style="left:273px;top:337px"><svg width="9" height="9"><path d="M2 2l5 5M7 2l-5 5" stroke="#55524d" stroke-width="1.800"/></svg></div>
<div class="tree" style="left:30px;top:352px;width:256px;height:206px"><div class="hdr" style="width:100px;border-right:1px solid #c9c4bc"><div class="t" style="left:2px;top:3px;letter-spacing:.4px">Атрибут</div></div><div class="hdr" style="left:100px;width:140px"><div class="t" style="left:3px;top:3px">Значение</div></div><div class="t" style="left:23px;top:19.1px;letter-spacing:0.3px">Иденти...</div><div class="t" style="left:103px;top:19.1px;letter-spacing:0px">PC1</div><div class="a" style="left:0;top:32.8px;width:240px;height:14px;background:#f6f6f6"></div><div class="t" style="left:23px;top:33.1px;letter-spacing:0.1px">Путь</div><div class="t" style="left:103px;top:33.1px;letter-spacing:-0.26px">/wlb_AGLKS/wdg_KC...</div><div class="t" style="left:23px;top:47.1px;letter-spacing:0.4px">Родитель</div><div class="t" style="left:103px;top:47.1px;letter-spacing:-0.05px">/wlb_Main/wdg_anS...</div><div class="a" style="left:0;top:60.8px;width:240px;height:14px;background:#f6f6f6"></div><div class="t" style="left:23px;top:61.1px;letter-spacing:0.1px">Владелец</div><div class="t" style="left:103px;top:61.1px;letter-spacing:0.1px">root:UI</div><div class="t" style="left:23px;top:75.1px;letter-spacing:0.35px">Доступ</div><div class="t" style="left:103px;top:75.1px;letter-spacing:-0.6px">RWRWRW</div><div class="a" style="left:0;top:88.8px;width:240px;height:14px;background:#f6f6f6"></div><div class="t" style="left:23px;top:89.1px;letter-spacing:0.25px">Корень</div><div class="t" style="left:103px;top:89.1px;letter-spacing:0px">Box</div><div class="t" style="left:23px;top:103.1px;letter-spacing:0.1px">Имя</div><div class="t" style="left:103px;top:103.1px;letter-spacing:0.3px">Отобр аналог</div><div class="a" style="left:0;top:116.8px;width:240px;height:50px;background:#f6f6f6"></div><div class="t" style="left:23px;top:135.1px;letter-spacing:0.2px">Описание</div><div class="t" style="left:103px;top:135.1px;letter-spacing:0px"></div><div class="t" style="left:23px;top:167.1px;letter-spacing:0.2px">Включен</div><div class="t" style="left:103px;top:167.1px;letter-spacing:0.1px">true</div><div class="a" style="left:0;top:180.8px;width:240px;height:14px;background:#f6f6f6"></div><div class="t" style="left:23px;top:181.1px;letter-spacing:0.2px">Активный</div><div class="t" style="left:103px;top:181.1px;letter-spacing:0.1px">true</div><div class="t" style="left:23px;top:195.1px;letter-spacing:0.2px">Геометрия</div><div class="t" style="left:103px;top:195.1px;letter-spacing:0.2px">[166, 84, 100, 40, ...</div><svg class="a" style="left:8px;top:198.3px" width="6" height="9"><path d="M0 0l5.500 4.500L0 9z" fill="#404040"/></svg><div class="a" style="left:240px;top:0;width:14px;height:204px;background:#e2dfd9;border-left:1px solid #b5b0a8"></div><div class="a" style="left:240px;top:0;width:14px;height:14px;background:linear-gradient(90deg,#f9f8f6,#e6e2dd);border:1px solid #b5b0a8"></div><svg class="a" style="left:243px;top:4px" width="9" height="6"><path d="M.5 5h8L4.500 .5z" fill="#4a4a4a"/></svg><div class="a" style="left:240px;top:14px;width:14px;height:82px;background:linear-gradient(90deg,#faf9f8,#e8e5e0);border:1px solid #b5b0a8;border-top:none"></div><div class="a" style="left:240px;top:191px;width:14px;height:13px;background:linear-gradient(90deg,#f9f8f6,#e6e2dd);border:1px solid #b5b0a8"></div><svg class="a" style="left:243px;top:195px" width="9" height="6"><path d="M.5 .5h8L4.500 5z" fill="#4a4a4a"/></svg></div>
<div id="mdi" class="a"></div>
<div id="cv" class="a"><svg width="583" height="462" viewBox="293 82 583 462">
<defs>
<linearGradient id="vgl" x1="0" x2="0" y1="0" y2="1"><stop offset="0" stop-color="#606060"/><stop offset=".5" stop-color="#e4e4e4"/><stop offset="1" stop-color="#606060"/></linearGradient>
<linearGradient id="vgr" x1="0" x2="0" y1="0" y2="1"><stop offset="0" stop-color="#606060"/><stop offset=".5" stop-color="#e4e4e4"/><stop offset="1" stop-color="#606060"/></linearGradient>
<linearGradient id="vgl2" x1="0" x2="0" y1="0" y2="1"><stop offset="0" stop-color="#606060"/><stop offset=".5" stop-color="#e4e4e4"/><stop offset="1" stop-color="#606060"/></linearGradient>
<linearGradient id="vgr2" x1="0" x2="0" y1="0" y2="1"><stop offset="0" stop-color="#606060"/><stop offset=".5" stop-color="#e4e4e4"/><stop offset="1" stop-color="#606060"/></linearGradient>
<linearGradient id="vgt" x1="0" x2="1" y1="0" y2="0"><stop offset="0" stop-color="#606060"/><stop offset=".5" stop-color="#e4e4e4"/><stop offset="1" stop-color="#606060"/></linearGradient>
<linearGradient id="vgb" x1="0" x2="1" y1="0" y2="0"><stop offset="0" stop-color="#606060"/><stop offset=".5" stop-color="#e4e4e4"/><stop offset="1" stop-color="#606060"/></linearGradient>
<linearGradient id="dome" x1="0" x2="1"><stop offset="0" stop-color="#6e6e6e"/><stop offset=".5" stop-color="#f2f2f2"/><stop offset="1" stop-color="#6e6e6e"/></linearGradient>
<linearGradient id="yv" x1="0" x2="0" y1="0" y2="1"><stop offset="0" stop-color="#808000"/><stop offset=".5" stop-color="#f2f200"/><stop offset="1" stop-color="#808000"/></linearGradient>
<linearGradient id="bh" x1="0" x2="1"><stop offset="0" stop-color="#000088"/><stop offset=".5" stop-color="#0000ff"/><stop offset="1" stop-color="#000088"/></linearGradient>
</defs>
<path d="M293.500 82V544M293 82.500H876" stroke="#000" stroke-width="1" fill="none"/>
<path d="M875.5 349V275.5H877" stroke="#8a8a8a" fill="none"/>
<text x="343.5" y="120.6" font-size="30.600" font-style="italic" fill="#fff" textLength="258" lengthAdjust="spacingAndGlyphs" font-family="Liberation Sans,sans-serif">Общестанционка</text><rect x="343.500" y="125" width="258" height="2" fill="#fff"/>
<path d="M639.500 502.500V271.500H705.500" fill="none" stroke="#8a8a8a"/><path d="M705.500 272V502.500H640" fill="none" stroke="#3e3e3e"/>
<g fill="none" stroke-linejoin="miter" stroke-linecap="butt"><path d="M313 290.500H393.500 M420.500 290.500H484.500 M511.500 290.500H537.500V333 M367.500 290.500V241.500H393.500 M420.500 241.500H448.500V290.500 M626.500 253V167.500H760 M626.500 279V489.500H657V477 M605 354.500H657V343 M626.500 419.500H657V408 M554 354.500H571 M684.500 336V350.500H717.500V483.500H684.500V470 M684.500 402V415.500H726 M760 415.500H780.500 M807.500 415.500H827.500 M854 415.500H880 M817.500 485.500V210.500H861.500 M770.500 415.500V485.500H780.500 M807.500 485.500H827 M853.500 485.500H864.500V415.500" stroke="#000" stroke-width="11"/><path d="M313 290.500H393.500 M420.500 290.500H484.500 M511.500 290.500H537.500V333 M367.500 290.500V241.500H393.500 M420.500 241.500H448.500V290.500 M626.500 253V167.500H760 M626.500 279V489.500H657V477 M605 354.500H657V343 M626.500 419.500H657V408 M554 354.500H571 M684.500 336V350.500H717.500V483.500H684.500V470 M684.500 402V415.500H726 M760 415.500H780.500 M807.500 415.500H827.500 M854 415.500H880 M817.500 485.500V210.500H861.500 M770.500 415.500V485.500H780.500 M807.500 485.500H827 M853.500 485.500H864.500V415.500" stroke="#888800" stroke-width="9"/><path d="M313 290.500H393.500 M420.500 290.500H484.500 M511.500 290.500H537.500V333 M367.500 290.500V241.500H393.500 M420.500 241.500H448.500V290.500 M626.500 253V167.500H760 M626.500 279V489.500H657V477 M605 354.500H657V343 M626.500 419.500H657V408 M554 354.500H571 M684.500 336V350.500H717.500V483.500H684.500V470 M684.500 402V415.500H726 M760 415.500H780.500 M807.500 415.500H827.500 M854 415.500H880 M817.500 485.500V210.500H861.500 M770.500 415.500V485.500H780.500 M807.500 485.500H827 M853.500 485.500H864.500V415.500" stroke="#a0a000" stroke-width="7"/><path d="M313 290.500H393.500 M420.500 290.500H484.500 M511.500 290.500H537.500V333 M367.500 290.500V241.500H393.500 M420.500 241.500H448.500V290.500 M626.500 253V167.500H760 M626.500 279V489.500H657V477 M605 354.500H657V343 M626.500 419.500H657V408 M554 354.500H571 M684.500 336V350.500H717.500V483.500H684.500V470 M684.500 402V415.500H726 M760 415.500H780.500 M807.500 415.500H827.500 M854 415.500H880 M817.500 485.500V210.500H861.500 M770.500 415.500V485.500H780.500 M807.500 485.500H827 M853.500 485.500H864.500V415.500" stroke="#bcbc00" stroke-width="5"/><path d="M313 290.500H393.500 M420.500 290.500H484.500 M511.500 290.500H537.500V333 M367.500 290.500V241.500H393.500 M420.500 241.500H448.500V290.500 M626.500 253V167.500H760 M626.500 279V489.500H657V477 M605 354.500H657V343 M626.500 419.500H657V408 M554 354.500H571 M684.500 336V350.500H717.500V483.500H684.500V470 M684.500 402V415.500H726 M760 415.500H780.500 M807.500 415.500H827.500 M854 415.500H880 M817.500 485.500V210.500H861.500 M770.500 415.500V485.500H780.500 M807.500 485.500H827 M853.500 485.500H864.500V415.500" stroke="#d9d900" stroke-width="3"/><path d="M313 290.500H393.500 M420.500 290.500H484.500 M511.500 290.500H537.500V333 M367.500 290.500V241.500H393.500 M420.500 241.500H448.500V290.500 M626.500 253V167.500H760 M626.500 279V489.500H657V477 M605 354.500H657V343 M626.500 419.500H657V408 M554 354.500H571 M684.500 336V350.500H717.500V483.500H684.500V470 M684.500 402V415.500H726 M760 415.500H780.500 M807.500 415.500H827.500 M854 415.500H880 M817.500 485.500V210.500H861.500 M770.500 415.500V485.500H780.500 M807.500 485.500H827 M853.500 485.500H864.500V415.500" stroke="#f2f200" stroke-width="1.2"/></g>
<path d="M307 281.5L314.5 286V296L307 299.5z" fill="url(#yv)"/><path d="M314 286L307 281.5V299.5L314 296" fill="none" stroke="#000" stroke-width=".9"/>
<path d="M759.500 158.500L766.800 167.500L759.500 176.500z" fill="url(#yv)" stroke="#000" stroke-width=".8"/>
<g fill="none" stroke-linejoin="miter" stroke-linecap="butt"><path d="M537.500 402V546" stroke="#000" stroke-width="11"/><path d="M537.500 402V546" stroke="#00008c" stroke-width="9"/><path d="M537.500 402V546" stroke="#0000a8" stroke-width="7"/><path d="M537.500 402V546" stroke="#0000c6" stroke-width="5"/><path d="M537.500 402V546" stroke="#0000e4" stroke-width="3"/><path d="M537.500 402V546" stroke="#0000ff" stroke-width="1.2"/></g>
<path d="M528 525.500H547L537.500 532z" fill="url(#bh)" stroke="#000" stroke-width=".8"/>
<text x="303.5" y="278.8" font-size="16.5" fill="#ffff00" text-anchor="start" textLength="51.300" lengthAdjust="spacingAndGlyphs" font-family="Liberation Sans,sans-serif">Газ НД</text><text x="704.3" y="157.3" font-size="12" fill="#ffff00" text-anchor="start"  font-family="Liberation Sans,sans-serif">На факел</text>
<g stroke="#000" stroke-width=".8"><path d="M406.6 241V230.5" stroke-width=".8" stroke="#1a1a1a"/><rect x="393.40000000000003" y="222.5" width="26.5" height="8" fill="#808080" stroke="#1c1c1c"/><path d="M392.90000000000003 233.4L406.6 241L392.90000000000003 248.6z" fill="url(#vgl)"/><path d="M420.3 233.4L406.6 241L420.3 248.6z" fill="url(#vgr)"/></g><text x="405.4" y="218.6" font-size="13.3" fill="#111" text-anchor="middle" textLength="30" lengthAdjust="spacingAndGlyphs" font-family="Liberation Sans,sans-serif">КШ2</text><g stroke="#000" stroke-width=".8"><path d="M406.6 290.5V280.0" stroke-width=".8" stroke="#1a1a1a"/><rect x="393.40000000000003" y="272.0" width="26.5" height="8" fill="#808080" stroke="#1c1c1c"/><path d="M392.90000000000003 282.9L406.6 290.5L392.90000000000003 298.1z" fill="url(#vgl)"/><path d="M420.3 282.9L406.6 290.5L420.3 298.1z" fill="url(#vgr)"/></g><text x="405.3" y="267.1" font-size="13.3" fill="#111" text-anchor="middle" textLength="30" lengthAdjust="spacingAndGlyphs" font-family="Liberation Sans,sans-serif">КШ1</text><g stroke="#000" stroke-width=".8"><path d="M626.5 265.6H616.0" stroke-width="1" stroke="#000"/><rect x="607.9" y="252.40000000000003" width="7.7" height="26.4" fill="#808080" stroke="#9a9a9a"/><path d="M618.9 251.90000000000003L626.5 265.6L634.1 251.90000000000003z" fill="url(#vgt)"/><path d="M618.9 279.3L626.5 265.6L634.1 279.3z" fill="url(#vgb)"/></g><text x="601.2" y="248.8" font-size="13.3" fill="#111" text-anchor="middle" textLength="30" lengthAdjust="spacingAndGlyphs" font-family="Liberation Sans,sans-serif">КШ5</text><g stroke="#000" stroke-width=".8"><path d="M793.7 415V404.5" stroke-width=".8" stroke="#1a1a1a"/><rect x="780.5" y="396.5" width="26.5" height="8" fill="#808080" stroke="#1c1c1c"/><path d="M780.0 407.4L793.7 415L780.0 422.6z" fill="url(#vgl)"/><path d="M807.4000000000001 407.4L793.7 415L807.4000000000001 422.6z" fill="url(#vgr)"/></g><text x="790.4" y="391.5" font-size="13.3" fill="#111" text-anchor="middle" textLength="30" lengthAdjust="spacingAndGlyphs" font-family="Liberation Sans,sans-serif">КШ6</text><g stroke="#000" stroke-width=".8"><path d="M840.7 415V404.5" stroke-width=".8" stroke="#1a1a1a"/><rect x="827.5" y="396.5" width="26.5" height="8" fill="#808080" stroke="#1c1c1c"/><path d="M827.0 407.4L840.7 415L827.0 422.6z" fill="url(#vgl)"/><path d="M854.4000000000001 407.4L840.7 415L854.4000000000001 422.6z" fill="url(#vgr)"/></g><text x="844.3" y="391.5" font-size="13.3" fill="#111" text-anchor="middle" textLength="38" lengthAdjust="spacingAndGlyphs" font-family="Liberation Sans,sans-serif">КШ21</text><g stroke="#000" stroke-width=".8"><path d="M793.7 485V474.5" stroke-width=".8" stroke="#1a1a1a"/><rect x="780.5" y="466.5" width="26.5" height="8" fill="#808080" stroke="#1c1c1c"/><path d="M780.0 477.4L793.7 485L780.0 492.6z" fill="url(#vgl)"/><path d="M807.4000000000001 477.4L793.7 485L807.4000000000001 492.6z" fill="url(#vgr)"/></g><text x="793.1" y="461.1" font-size="13.3" fill="#111" text-anchor="middle"  font-family="Liberation Sans,sans-serif">КШ7</text><g stroke="#000" stroke-width=".8"><path d="M840 485V474.5" stroke-width=".8" stroke="#1a1a1a"/><rect x="826.8" y="466.5" width="26.5" height="8" fill="#808080" stroke="#1c1c1c"/><path d="M826.3 477.4L840 485L826.3 492.6z" fill="url(#vgl)"/><path d="M853.7 477.4L840 485L853.7 492.6z" fill="url(#vgr)"/></g><text x="841.4" y="461.1" font-size="13.1" fill="#111" text-anchor="middle"  font-family="Liberation Sans,sans-serif">КШ22</text>
<g stroke="#000" stroke-width=".8"><path d="M483.3 279.5A14.200 10.500 0 0 1 511.7 279.5z" fill="url(#dome)" stroke="#444" stroke-width=".6"/><rect x="494.3" y="279.5" width="6.400" height="10" fill="none" stroke="#222" stroke-width=".8"/><path d="M483.8 282.7L494.0 290.5L483.8 298.3z" fill="url(#vgl2)"/><path d="M511.2 282.7L501.0 290.5L511.2 298.3z" fill="url(#vgr2)"/><rect x="494.3" y="288.8" width="6.400" height="6.400" fill="#0000ff" stroke="none"/></g><g stroke="#000" stroke-width=".8"><path d="M859.5 199.5A14.200 10.500 0 0 1 887.9000000000001 199.5z" fill="url(#dome)" stroke="#444" stroke-width=".6"/><rect x="870.5" y="199.5" width="6.400" height="10" fill="none" stroke="#222" stroke-width=".8"/><path d="M860.0 202.7L870.2 210.5L860.0 218.3z" fill="url(#vgl2)"/><path d="M887.4000000000001 202.7L877.2 210.5L887.4000000000001 218.3z" fill="url(#vgr2)"/><rect x="870.5" y="208.8" width="6.400" height="6.400" fill="#0000ff" stroke="none"/></g>
<path d="M497.500 206V258M525.500 206V282.500M518 282.500H534M327.500 298.500V365.500M322 298.500H334M327.500 333.500H337M327.500 365.500H337M588.500 376.500V435M583 376.500H595M743.500 437.500V510M738 437.500H750M844.500 158V202.500M837 202.500H855M873.500 158V181" stroke="#000" stroke-width="1" fill="none"/><path d="M492 257H503L497.500 268z" fill="#000"/><path d="M868 179H879.500L873.700 190z" fill="#000"/>
<rect x="519.500" y="332.500" width="35.500" height="71" rx="17" fill="#d9d9d9" stroke="#000" stroke-width="1"/><text x="537.500" y="368.800" font-size="15" font-weight="bold" fill="#000" text-anchor="middle" font-family="Liberation Sans,sans-serif">С1</text>
<circle cx="588.2" cy="354.8" r="17.6" fill="#d9d9d9" stroke="#000" stroke-width="1"/><path d="M602.6 344.5L570.6 354.8L602.6 365.1" fill="none" stroke="#000" stroke-width=".9"/><text x="590.1" y="333.3" font-size="13.7" letter-spacing=".25" fill="#111" text-anchor="middle" font-family="Liberation Sans,sans-serif">РР1</text><circle cx="743" cy="414.8" r="17.6" fill="#d9d9d9" stroke="#000" stroke-width="1"/><path d="M757.4 404.5L725.4 414.8L757.4 425.1" fill="none" stroke="#000" stroke-width=".9"/><text x="743.2" y="394.5" font-size="13.7" letter-spacing=".25" fill="#111" text-anchor="middle" font-family="Liberation Sans,sans-serif">РР3</text>
<text x="673" y="289.800" font-size="12.800" font-weight="bold" fill="#000" text-anchor="middle" font-family="Liberation Sans,sans-serif">КУ НД</text><path d="M648.4 298.4L692.1 308.59999999999997V338.0L648.4 346.5z" fill="#c8c8c8" stroke="#000" stroke-width="1.100"/><path d="M659.1999999999999 306.3L676.8 316.40L659.1999999999999 326.50z" fill="#f00" stroke="#400" stroke-width=".5"/><text x="670.1" y="338.9" font-size="11.4" textLength="34" lengthAdjust="spacingAndGlyphs" fill="#111" text-anchor="middle" font-family="Liberation Sans,sans-serif">КМ101</text><path d="M648.4 364.5L692.1 374.7V404.1L648.4 412.6z" fill="#c8c8c8" stroke="#000" stroke-width="1.100"/><path d="M659.1999999999999 371.3L676.8 381.40L659.1999999999999 391.50z" fill="#f00" stroke="#400" stroke-width=".5"/><text x="670.1" y="403.9" font-size="11.4" textLength="34" lengthAdjust="spacingAndGlyphs" fill="#111" text-anchor="middle" font-family="Liberation Sans,sans-serif">КМ201</text><path d="M648.4 432.4L692.1 442.59999999999997V472.0L648.4 480.5z" fill="#c8c8c8" stroke="#000" stroke-width="1.100"/><path d="M659.1999999999999 438.3L676.8 448.40L659.1999999999999 458.50z" fill="#f00" stroke="#400" stroke-width=".5"/><text x="670.1" y="470.9" font-size="11.4" textLength="34" lengthAdjust="spacingAndGlyphs" fill="#111" text-anchor="middle" font-family="Liberation Sans,sans-serif">КМ301</text>
<rect x="459.5" y="166.5" width="99.2" height="39" fill="#000" stroke="#868686"/><text x="460.8" y="179" font-size="11.700" font-weight="bold" fill="#aaaaaa" font-family="Liberation Sans,sans-serif">Нет данных</text><text x="556.8" y="201.4" font-size="23" font-weight="bold" fill="#808080" text-anchor="end" font-family="Liberation Sans,sans-serif">1.340</text><rect x="498.5" y="193.5" width="58.500" height="2" fill="#808080"/><rect x="337.5" y="312.5" width="99.2" height="39" fill="#000" stroke="#868686"/><text x="338.8" y="325" font-size="11.700" font-weight="bold" fill="#aaaaaa" font-family="Liberation Sans,sans-serif">Нет данных</text><text x="434.8" y="347.4" font-size="23" font-weight="bold" fill="#808080" text-anchor="end" font-family="Liberation Sans,sans-serif">1.340</text><rect x="376.5" y="339.5" width="58.500" height="2" fill="#808080"/><rect x="337.5" y="352.5" width="99.2" height="39" fill="#000" stroke="#868686"/><text x="338.8" y="365" font-size="11.700" font-weight="bold" fill="#aaaaaa" font-family="Liberation Sans,sans-serif">Нет данных</text><text x="434.8" y="387.4" font-size="23" font-weight="bold" fill="#808080" text-anchor="end" font-family="Liberation Sans,sans-serif">1.340</text><rect x="376.5" y="379.5" width="58.500" height="2" fill="#808080"/><rect x="812.5" y="119.5" width="99.2" height="39" fill="#000" stroke="#868686"/><text x="813.8" y="132" font-size="11.700" font-weight="bold" fill="#aaaaaa" font-family="Liberation Sans,sans-serif">Нет данных</text><text x="909.8" y="154.4" font-size="23" font-weight="bold" fill="#808080" text-anchor="end" font-family="Liberation Sans,sans-serif">1.340</text><rect x="851.5" y="146.5" width="58.500" height="2" fill="#808080"/><rect x="516.5" y="435.5" width="99.500" height="22" fill="#000" stroke="#787878" stroke-width="1.2"/><path d="M531.5 435v22" stroke="#787878" stroke-width="1.2"/><text x="524" y="451.8" font-size="14" font-weight="bold" fill="#fff" text-anchor="middle" font-family="Liberation Sans,sans-serif">P</text><text x="614.6" y="453.3" font-size="19.400" font-weight="bold" fill="#808080" text-anchor="end" font-family="Liberation Sans,sans-serif">1.340</text><rect x="565" y="446.7" width="50" height="2.100" fill="#808080"/><rect x="516.5" y="457.5" width="99.500" height="22" fill="#000" stroke="#787878" stroke-width="1.2"/><path d="M531.5 457v22" stroke="#787878" stroke-width="1.2"/><text x="524" y="473.8" font-size="14" font-weight="bold" fill="#fff" text-anchor="middle" font-family="Liberation Sans,sans-serif">P</text><text x="614.6" y="475.3" font-size="19.400" font-weight="bold" fill="#808080" text-anchor="end" font-family="Liberation Sans,sans-serif">1.340</text><rect x="565" y="468.7" width="50" height="2.100" fill="#808080"/><rect x="516.5" y="480.0" width="99.500" height="22" fill="#000" stroke="#787878" stroke-width="1.2"/><path d="M531.5 479.5v22" stroke="#787878" stroke-width="1.2"/><text x="524" y="496.3" font-size="14" font-weight="bold" fill="#fff" text-anchor="middle" font-family="Liberation Sans,sans-serif">P</text><text x="614.6" y="497.8" font-size="19.400" font-weight="bold" fill="#808080" text-anchor="end" font-family="Liberation Sans,sans-serif">1.340</text><rect x="565" y="491.2" width="50" height="2.100" fill="#808080"/><rect x="706.5" y="511.0" width="99.500" height="22" fill="#000" stroke="#787878" stroke-width="1.2"/><path d="M721.5 510.5v22" stroke="#787878" stroke-width="1.2"/><text x="714" y="527.3" font-size="14" font-weight="bold" fill="#fff" text-anchor="middle" font-family="Liberation Sans,sans-serif">P</text><text x="804.6" y="528.8" font-size="19.400" font-weight="bold" fill="#808080" text-anchor="end" font-family="Liberation Sans,sans-serif">1.340</text><rect x="755" y="522.2" width="50" height="2.100" fill="#808080"/><rect x="706.5" y="533.0" width="99.500" height="22" fill="#000" stroke="#787878" stroke-width="1.2"/><path d="M721.5 532.5v22" stroke="#787878" stroke-width="1.2"/><text x="714" y="549.3" font-size="14" font-weight="bold" fill="#fff" text-anchor="middle" font-family="Liberation Sans,sans-serif">P</text><text x="804.6" y="550.8" font-size="19.400" font-weight="bold" fill="#808080" text-anchor="end" font-family="Liberation Sans,sans-serif">1.340</text><rect x="755" y="544.2" width="50" height="2.100" fill="#808080"/>
<rect x="456.5" y="163.5" width="5" height="5" fill="#90ee90" stroke="#2e7d32" stroke-width=".7"/><rect x="456.5" y="183.5" width="5" height="5" fill="#90ee90" stroke="#2e7d32" stroke-width=".7"/><rect x="456.5" y="203.5" width="5" height="5" fill="#90ee90" stroke="#2e7d32" stroke-width=".7"/><rect x="506.5" y="163.5" width="5" height="5" fill="#90ee90" stroke="#2e7d32" stroke-width=".7"/><rect x="506.5" y="203.5" width="5" height="5" fill="#90ee90" stroke="#2e7d32" stroke-width=".7"/><rect x="556.5" y="163.5" width="5" height="5" fill="#90ee90" stroke="#2e7d32" stroke-width=".7"/><rect x="556.5" y="183.5" width="5" height="5" fill="#90ee90" stroke="#2e7d32" stroke-width=".7"/><rect x="556.5" y="203.5" width="5" height="5" fill="#90ee90" stroke="#2e7d32" stroke-width=".7"/>
</svg></div>
<div class="a" style="left:876px;top:82px;width:15px;height:461px;background:#e4e1dc"></div><div class="a" style="left:876px;top:82px;width:15px;height:13px;background:linear-gradient(90deg,#fdfdfc,#edeae6);border-bottom:1px solid #77736d"></div><svg class="a" style="left:879.5px;top:86px" width="8" height="5"><path d="M0 4.5h8L4 0z" fill="#505050"/></svg><div class="a" style="left:876px;top:95px;width:15px;height:346px;background:linear-gradient(90deg,#fdfdfc,#edeae6);border-bottom:1px solid #77736d"></div><div class="a" style="left:876px;top:528px;width:15px;height:15px;background:linear-gradient(90deg,#fdfdfc,#edeae6);border-top:1px solid #77736d"></div><svg class="a" style="left:879.5px;top:533.5px" width="8" height="5"><path d="M0 0h8L4 4.5z" fill="#505050"/></svg><div class="a" style="left:293px;top:543px;width:583px;height:14px;background:#e4e1dc"></div><div class="a" style="left:293px;top:543px;width:14px;height:14px;background:linear-gradient(#fefefd,#efece8);border-right:1px solid #77736d"></div><svg class="a" style="left:296px;top:546px" width="5" height="8"><path d="M4.5 0v8L0 4z" fill="#505050"/></svg><div class="a" style="left:307px;top:543px;width:360px;height:14px;background:linear-gradient(#fefefd,#efece8);border-right:1px solid #77736d"></div><div class="a" style="left:862px;top:543px;width:14px;height:14px;background:linear-gradient(#fefefd,#efece8);border-left:1px solid #77736d"></div><svg class="a" style="left:867px;top:546px" width="5" height="8"><path d="M0 0v8l4.500-4z" fill="#505050"/></svg><div class="a" style="left:876px;top:543px;width:15px;height:14px;background:#efebe7;border-left:1px solid #c9c4bc;border-top:1px solid #c9c4bc"></div><svg class="a" style="left:879px;top:546px" width="10" height="10"><rect x="0" y="0" width="1" height="1" fill="#a59f96"/><rect x="0" y="3" width="1" height="1" fill="#a59f96"/><rect x="0" y="6" width="1" height="1" fill="#a59f96"/><rect x="3" y="0" width="1" height="1" fill="#a59f96"/><rect x="3" y="3" width="1" height="1" fill="#a59f96"/><rect x="3" y="6" width="1" height="1" fill="#a59f96"/><rect x="6" y="0" width="1" height="1" fill="#a59f96"/><rect x="6" y="3" width="1" height="1" fill="#a59f96"/><rect x="6" y="6" width="1" height="1" fill="#a59f96"/></svg>
<div id="btb" class="a"></div>
<svg class="a" style="left:9px;top:567.5px" width="6" height="22"><rect x="0" y="0" width="1" height="1" fill="#b0aaa1"/><rect x="1" y="1" width="1" height="1" fill="#fbfaf9"/><rect x="3" y="0" width="1" height="1" fill="#b0aaa1"/><rect x="4" y="1" width="1" height="1" fill="#fbfaf9"/><rect x="0" y="3" width="1" height="1" fill="#b0aaa1"/><rect x="1" y="4" width="1" height="1" fill="#fbfaf9"/><rect x="3" y="3" width="1" height="1" fill="#b0aaa1"/><rect x="4" y="4" width="1" height="1" fill="#fbfaf9"/><rect x="0" y="6" width="1" height="1" fill="#b0aaa1"/><rect x="1" y="7" width="1" height="1" fill="#fbfaf9"/><rect x="3" y="6" width="1" height="1" fill="#b0aaa1"/><rect x="4" y="7" width="1" height="1" fill="#fbfaf9"/><rect x="0" y="9" width="1" height="1" fill="#b0aaa1"/><rect x="1" y="10" width="1" height="1" fill="#fbfaf9"/><rect x="3" y="9" width="1" height="1" fill="#b0aaa1"/><rect x="4" y="10" width="1" height="1" fill="#fbfaf9"/><rect x="0" y="12" width="1" height="1" fill="#b0aaa1"/><rect x="1" y="13" width="1" height="1" fill="#fbfaf9"/><rect x="3" y="12" width="1" height="1" fill="#b0aaa1"/><rect x="4" y="13" width="1" height="1" fill="#fbfaf9"/><rect x="0" y="15" width="1" height="1" fill="#b0aaa1"/><rect x="1" y="16" width="1" height="1" fill="#fbfaf9"/><rect x="3" y="15" width="1" height="1" fill="#b0aaa1"/><rect x="4" y="16" width="1" height="1" fill="#fbfaf9"/></svg>
<svg class="a" style="left:0;top:558px" width="340" height="35" viewBox="0 558 340 35"><defs>
<linearGradient id="gb" x1="0" y1="0" x2="1" y2="1"><stop offset="0" stop-color="#a9a9ff"/><stop offset="1" stop-color="#4a4aee"/></linearGradient>
<linearGradient id="gg" x1="0" y1="0" x2="1" y2="1"><stop offset="0" stop-color="#d9d9d9"/><stop offset="1" stop-color="#a6a6a6"/></linearGradient>
<linearGradient id="gy" x1="0" y1="0" x2="1" y2="1"><stop offset="0" stop-color="#ffe97a"/><stop offset="1" stop-color="#f2c318"/></linearGradient>
</defs><rect x="22.3" y="566" width="15.5" height="15.0" fill="url(#gg)" stroke="#8e8e8e" stroke-width=".7"/><rect x="26.3" y="569.3" width="16.1" height="16.7" fill="url(#gb)" stroke="#3a3ad0" stroke-width=".7"/><rect x="57.3" y="569.3" width="15.9" height="16.7" fill="url(#gb)" stroke="#3a3ad0" stroke-width=".7"/><rect x="52.9" y="566" width="16.3" height="16.0" fill="url(#gg)" stroke="#8e8e8e" stroke-width=".7"/><rect x="83.7" y="565.7" width="10.3" height="9.9" fill="url(#gg)" stroke="#8e8e8e" stroke-width=".7"/><rect x="94.3" y="576.2" width="10.7" height="10.3" fill="url(#gg)" stroke="#8e8e8e" stroke-width=".7"/><rect x="89.5" y="571" width="9.5" height="10.5" fill="url(#gb)" stroke="#3a3ad0" stroke-width=".7"/><rect x="114.3" y="565.7" width="10.7" height="10.1" fill="url(#gg)" stroke="#8e8e8e" stroke-width=".7"/><rect x="120.7" y="571" width="9.3" height="10.5" fill="url(#gb)" stroke="#3a3ad0" stroke-width=".7"/><rect x="125.2" y="576.2" width="10.6" height="10.3" fill="url(#gg)" stroke="#8e8e8e" stroke-width=".7"/><rect x="144" y="567" width="1" height="18" fill="#d6d1ca"/><rect x="145" y="567" width="1" height="18" fill="#fbfaf8"/><rect x="153" y="565" width="2" height="21.500" fill="#111"/><rect x="156.8" y="567.3" width="13.8" height="7.1" fill="url(#gy)" stroke="#c9a018" stroke-width=".7"/><rect x="156.8" y="575.8" width="16.6" height="9.5" fill="url(#gb)" stroke="#3a3ad0" stroke-width=".7"/><rect x="193.500" y="565" width="1" height="21.500" fill="#111"/><g opacity=".9"><rect x="187" y="567.3" width="13.8" height="7.1" fill="url(#gy)" stroke="#c9a018" stroke-width=".7"/><rect x="185.4" y="575.8" width="17.2" height="9.5" fill="url(#gb)" stroke="#3a3ad0" stroke-width=".7"/></g><rect x="218.2" y="567.3" width="13.8" height="7.1" fill="url(#gy)" stroke="#c9a018" stroke-width=".7"/><rect x="215.3" y="575.8" width="16.7" height="9.5" fill="url(#gb)" stroke="#3a3ad0" stroke-width=".7"/><rect x="233.500" y="565" width="2" height="21.500" fill="#111"/><rect x="245" y="565.500" width="21.500" height="1.800" fill="#111"/><rect x="247.3" y="568.3" width="8.5" height="14.7" fill="url(#gy)" stroke="#c9a018" stroke-width=".7"/><rect x="256.9" y="568.3" width="8.1" height="17.3" fill="url(#gb)" stroke="#3a3ad0" stroke-width=".7"/><rect x="276" y="576.200" width="21.500" height="1" fill="#111"/><g opacity=".92"><rect x="277.4" y="569.5" width="9.0" height="13.9" fill="url(#gy)" stroke="#c9a018" stroke-width=".7"/><rect x="288" y="567.7" width="7.8" height="16.8" fill="url(#gb)" stroke="#3a3ad0" stroke-width=".7"/></g><rect x="309" y="568.9" width="8.7" height="14.7" fill="url(#gy)" stroke="#c9a018" stroke-width=".7"/><rect x="318.8" y="566.2" width="7.8" height="17.4" fill="url(#gb)" stroke="#3a3ad0" stroke-width=".7"/><rect x="307.500" y="584.500" width="21.500" height="1.800" fill="#111"/></svg>
<div id="st" class="a"><div class="t" style="left:666px">100%</div><div class="t" style="left:719px">Изм. размера .</div><div class="t" style="left:823px;color:#0a8a0a">roman</div></div>
<svg class="a" style="left:878px;top:604px" width="12" height="12"><rect x="9" y="9" width="1" height="1" fill="#b5afa6"/><rect x="9" y="6" width="1" height="1" fill="#b5afa6"/><rect x="9" y="3" width="1" height="1" fill="#b5afa6"/><rect x="9" y="0" width="1" height="1" fill="#b5afa6"/><rect x="6" y="9" width="1" height="1" fill="#b5afa6"/><rect x="6" y="6" width="1" height="1" fill="#b5afa6"/><rect x="6" y="3" width="1" height="1" fill="#b5afa6"/><rect x="3" y="9" width="1" height="1" fill="#b5afa6"/><rect x="3" y="6" width="1" height="1" fill="#b5afa6"/><rect x="0" y="9" width="1" height="1" fill="#b5afa6"/></svg>

</div>
</body></html>
